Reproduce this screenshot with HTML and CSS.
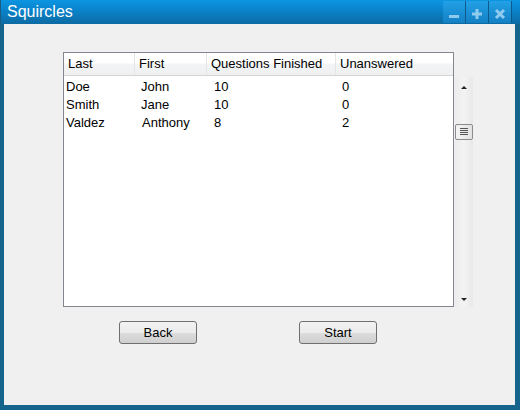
FILE: index.html
```html
<!DOCTYPE html>
<html>
<head>
<meta charset="utf-8">
<link rel="stylesheet" href="styles.css">
</head>
<body>
<div class="window">
  <div class="titlebar">
    <div class="title">Squircles</div>
    <div class="tbuttons">
      <div class="tbtn"><svg width="12" height="12" viewBox="0 0 12 12"><rect x="1" y="7" width="10" height="3" fill="#8ecbef"/></svg></div>
      <div class="tbtn"><svg width="12" height="12" viewBox="0 0 12 12"><rect x="1" y="4.5" width="10" height="3" fill="#8ecbef"/><rect x="4.5" y="1" width="3" height="10" fill="#8ecbef"/></svg></div>
      <div class="tbtn"><svg width="12" height="12" viewBox="0 0 12 12"><path d="M2 2 L10 10 M10 2 L2 10" stroke="#8ecbef" stroke-width="3"/></svg></div>
    </div>
  </div>
  <div class="content">
    <div class="listrow">
      <div class="table">
        <div class="thead">
          <div class="th c1">Last</div>
          <div class="th c2">First</div>
          <div class="th c3">Questions Finished</div>
          <div class="th c4">Unanswered</div>
        </div>
        <div class="tbody">
          <div class="tr"><div class="td c1">Doe</div><div class="td c2">John</div><div class="td c3">10</div><div class="td c4">0</div></div>
          <div class="tr"><div class="td c1">Smith</div><div class="td c2">Jane</div><div class="td c3">10</div><div class="td c4">0</div></div>
          <div class="tr"><div class="td c1">Valdez</div><div class="td c2 shift">Anthony</div><div class="td c3">8</div><div class="td c4">2</div></div>
        </div>
      </div>
      <div class="scrollbar">
        <div class="arrow up"></div>
        <div class="thumb">
          <svg width="10" height="8" viewBox="0 0 10 8"><path d="M1 0.5H9M1 2.5H9M1 4.5H9M1 6.5H9" stroke="#555" stroke-width="1"/></svg>
        </div>
        <div class="spacer"></div>
        <div class="arrow down"></div>
      </div>
    </div>
    <div class="buttons">
      <button class="btn">Back</button>
      <button class="btn">Start</button>
    </div>
  </div>
</div>
</body>
</html>
```
FILE: styles.css
```css
html, body {
  margin: 0;
  padding: 0;
}
body {
  width: 520px;
  height: 410px;
  overflow: hidden;
  font-family: "Liberation Sans", Arial, sans-serif;
}
.window {
  width: 520px;
  height: 410px;
  box-sizing: border-box;
  background: #14648b;
  display: flex;
  flex-direction: column;
}
.titlebar {
  height: 24px;
  flex: none;
  display: flex;
  align-items: flex-start;
  background: linear-gradient(#0c95e1 0%, #0a82c9 45%, #0d6aa3 100%);
  border-left: 1px solid #195d82;
}
.title {
  flex: 1;
  color: #ffffff;
  font-size: 16px;
  line-height: 23px;
  padding-left: 6px;
}
.tbuttons {
  display: flex;
  margin-top: 1px;
  margin-right: 8px;
  height: 22px;
}
.tbtn {
  width: 22px;
  height: 22px;
  border-right: 1px solid #0d5a8a;
  background: linear-gradient(#22a0e6, #1480c4);
  display: flex;
  align-items: center;
  justify-content: center;
}
.tbtn svg {
  margin-top: 4px;
}
.content {
  flex: 1;
  margin: 0 5px 5px 4px;
  background: #f0f0f0;
  padding: 28px 0 0 59px;
}
.listrow {
  display: flex;
  align-items: flex-end;
  gap: 1px;
}
.table {
  width: 389px;
  height: 253px;
  border: 1px solid #828790;
  background: #ffffff;
  font-size: 13px;
  color: #000;
}
.thead {
  display: flex;
  height: 22px;
  border-bottom: 1px solid #d5d5d5;
  background: linear-gradient(#ffffff 0%, #ffffff 45%, #f3f4f6 50%, #eef0f2 100%);
}
.th {
  box-sizing: border-box;
  line-height: 22px;
  border-right: 1px solid #e3e5e8;
  padding-left: 4px;
  white-space: nowrap;
}
.th.c1 { width: 71px; }
.th.c2 { width: 72px; padding-left: 4px; }
.th.c3 { width: 129px; padding-left: 4px; }
.th.c4 { width: 117px; border-right: none; padding-left: 4px; }
.tbody {
  padding-top: 2px;
}
.tr {
  display: flex;
  height: 18px;
  line-height: 18px;
}
.td {
  box-sizing: border-box;
  white-space: nowrap;
}
.td.c1 { width: 71px; padding-left: 2px; }
.td.c2 { width: 72px; padding-left: 6px; }
.td.c2.shift { padding-left: 7px; }
.td.c3 { width: 129px; padding-left: 7px; }
.td.c4 { width: 117px; padding-left: 6px; }
.scrollbar {
  width: 18px;
  height: 230px;
  box-sizing: border-box;
  background: linear-gradient(90deg, #ececec, #f3f3f3 50%, #e8e8e8);
  display: flex;
  flex-direction: column;
  align-items: center;
}
.arrow {
  width: 0;
  height: 0;
  border-left: 3px solid transparent;
  border-right: 3px solid transparent;
  flex: none;
}
.arrow.up {
  border-bottom: 3px solid #222;
  margin-top: 9px;
}
.arrow.down {
  border-top: 3px solid #222;
  margin-bottom: 6px;
}
.thumb {
  width: 18px;
  height: 16px;
  box-sizing: border-box;
  margin-top: 35px;
  border: 1px solid #8c8c8c;
  border-radius: 2px;
  background: linear-gradient(90deg, #f4f4f4, #e2e2e2);
  display: flex;
  align-items: center;
  justify-content: center;
  flex: none;
}
.spacer {
  flex: 1;
}
.buttons {
  display: flex;
  gap: 102px;
  margin-top: 14px;
  padding-left: 56px;
}
.btn {
  width: 78px;
  height: 23px;
  box-sizing: border-box;
  border: 1px solid #707070;
  border-radius: 3px;
  background: linear-gradient(#f2f2f2 0%, #ebebeb 50%, #dddddd 51%, #cfcfcf 100%);
  font-family: "Liberation Sans", Arial, sans-serif;
  font-size: 13px;
  color: #000;
  padding: 0;
  line-height: 21px;
}
```
